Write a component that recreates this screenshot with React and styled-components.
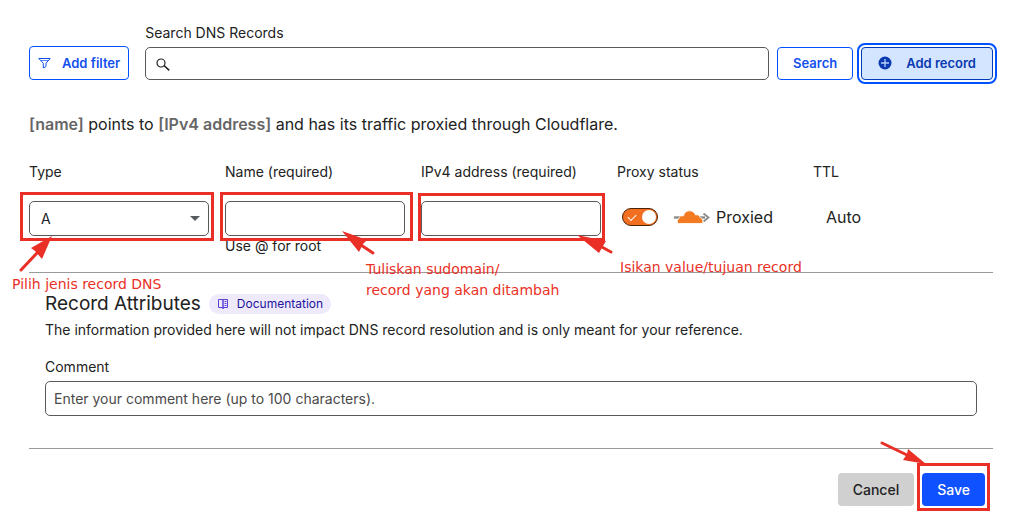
import { useState } from 'react';
import styled, { createGlobalStyle } from 'styled-components';

const GlobalStyle = createGlobalStyle`
  * {
    box-sizing: border-box;
  }

  body {
    margin: 0;
    background-color: #ffffff;
    color: #222222;
    font-family: Inter, 'Liberation Sans', sans-serif;
    font-size: 14px;
    line-height: 20px;
  }

  input,
  select,
  button {
    font-family: inherit;
    font-size: 14px;
    color: inherit;
  }
`;

const Page = styled.main`
  padding: 23px 31px 5px 29px;
`;

const Toolbar = styled.form`
  display: flex;
  align-items: flex-end;
  gap: 8px;
`;

const SearchField = styled.div`
  display: flex;
  flex-direction: column;
  flex: 1;
  gap: 4px;
  margin-left: 8px;
`;

const SearchBox = styled.div`
  position: relative;

  svg {
    position: absolute;
    top: 11px;
    left: 11px;
  }
`;

const TextInput = styled.input`
  display: block;
  width: 100%;
  height: ${(props) => props.$height || 35}px;
  padding: 0 8px;
  padding-left: ${(props) => (props.$icon ? 34 : 8)}px;
  border: 1px solid #595959;
  border-radius: 5px;
  background-color: white;

  &::placeholder {
    color: #4a4a4a;
    opacity: 1;
  }
`;

const OutlineButton = styled.button`
  display: flex;
  align-items: center;
  justify-content: center;
  gap: ${(props) => props.$gap || 10}px;
  height: ${(props) => props.$height || 33}px;
  padding: 0 ${(props) => props.$pad || 8}px 1px;
  border: 1px solid #0051ff;
  border-radius: 4px;
  background-color: white;
  color: #1250ee;
  font-size: 13px;
  font-weight: 600;
  white-space: nowrap;
  cursor: pointer;
`;

const AddRecordButton = styled(OutlineButton)`
  border-color: #003cb8;
  background-color: #d4e5ff;
  color: #0a39b0;
  outline: 2px solid #0051ff;
  outline-offset: 2px;
`;

const Summary = styled.p`
  margin: 32px 0 0;
  font-size: 16px;
  line-height: 24px;

  strong {
    color: #666666;
    font-weight: 600;
  }
`;

const Fields = styled.div`
  display: grid;
  grid-template-columns: repeat(5, 1fr);
  gap: 16px;
  margin-top: 26px;
  padding-bottom: 16px;
  border-bottom: 1px solid #9a9a9a;
`;

const Field = styled.div`
  display: flex;
  flex-direction: column;
`;

const FieldLabel = styled.label`
  margin-bottom: 19px;
`;

const Control = styled.div`
  position: relative;
`;

const Select = styled.select`
  display: block;
  width: 100%;
  height: 35px;
  padding: 0 11px;
  border: 1px solid #595959;
  border-radius: 5px;
  background-color: white;
  appearance: none;
`;

const Caret = styled.span`
  position: absolute;
  top: 15px;
  right: 9px;
  border: 5px solid transparent;
  border-top-color: #555c60;
  border-bottom: 0;
  pointer-events: none;
`;

const Value = styled.div`
  display: flex;
  align-items: center;
  height: 32px;
  padding-left: ${(props) => props.$indent}px;
  font-size: 16px;
`;

const Switch = styled.input`
  position: relative;
  width: 36px;
  height: 18px;
  margin: 0 15px 0 0;
  border: 1px solid #4d2409;
  border-radius: 9px;
  background-color: ${(props) => (props.checked ? '#f26f21' : '#9a9a9a')};
  appearance: none;
  cursor: pointer;

  &::before {
    content: '';
    position: absolute;
    top: 5px;
    left: 5px;
    width: 7px;
    height: 4px;
    border-left: 1px solid white;
    border-bottom: 1px solid white;
    transform: rotate(-45deg);
  }

  &::after {
    content: '';
    position: absolute;
    top: 1px;
    left: ${(props) => (props.checked ? 19 : 1)}px;
    width: 14px;
    height: 14px;
    border-radius: 50%;
    background-color: white;
  }
`;

const ProxiedLabel = styled.label`
  display: flex;
  align-items: center;
  gap: 6px;
`;

const Attributes = styled.section`
  padding: 19px 16px 32px;
  border-bottom: 1px solid #9a9a9a;
`;

const TitleRow = styled.div`
  display: flex;
  align-items: center;
  gap: 8px;
`;

const Title = styled.h2`
  margin: 0;
  font-size: 19px;
  font-weight: 400;
  line-height: 24px;
`;

const DocLink = styled.a`
  display: flex;
  align-items: center;
  gap: 8px;
  height: 20px;
  padding: 0 8px;
  border-radius: 10px;
  background-color: #eeeafc;
  color: #25149b;
  font-size: 12px;
  text-decoration: none;
`;

const Description = styled.p`
  margin: 4px 0 17px;
`;

const CommentLabel = styled.label`
  display: block;
  margin-bottom: 4px;
`;

const Actions = styled.div`
  display: flex;
  justify-content: flex-end;
  gap: 8px;
  padding: 24px 8px 0 0;
`;

const SolidButton = styled.button`
  display: block;
  height: 33px;
  padding: 0 15px;
  border: none;
  border-radius: 4px;
  background-color: ${(props) => (props.$primary ? '#0f51ff' : '#d0d0d0')};
  color: ${(props) => (props.$primary ? 'white' : '#222222')};
  font-weight: 500;
  cursor: pointer;
`;

// red tutorial marks drawn over the form
const Highlight = styled.span`
  position: absolute;
  inset: ${(props) => props.$inset};
  border: 3px solid #e92f26;
  pointer-events: none;
`;

const ArrowSvg = styled.svg`
  position: absolute;
  top: 0;
  left: 0;
  overflow: visible;
  pointer-events: none;
`;

const Note = styled.span`
  position: absolute;
  top: ${(props) => props.$top}px;
  left: ${(props) => props.$left}px;
  color: #e92f26;
  font-family: 'DejaVu Sans', sans-serif;
  font-size: 14px;
  line-height: 21px;
  white-space: nowrap;
  pointer-events: none;
`;

const Arrow = ({ line, head }) => (
  <ArrowSvg width="1" height="1" aria-hidden="true">
    <path d={line} stroke="#e92f26" strokeWidth="3" strokeLinecap="round" />
    <path d={head} fill="#e92f26" />
  </ArrowSvg>
);

const FilterIcon = () => (
  <svg width="13" height="12" viewBox="0 0 13 12" fill="none" stroke="currentColor">
    <path d="M.8 1.5h11.400L8 6.200v3.300L5.300 11V6.200z" />
    <path d="M3 3.500h7" strokeWidth="0.7" />
  </svg>
);

const SearchIcon = () => (
  <svg width="14" height="13" viewBox="0 0 14 13" fill="none" stroke="#222222">
    <circle cx="5" cy="5" r="4" strokeWidth="1.2" />
    <path d="M8 7.5l5.2 4.8" strokeWidth="1.6" />
  </svg>
);

const PlusIcon = () => (
  <svg width="14" height="14" viewBox="0 0 14 14">
    <circle cx="7" cy="7" r="6.5" fill="#0a39b0" />
    <path d="M7 3v8M3 7h8" stroke="#b8cff8" strokeWidth="1.3" />
  </svg>
);

const BookIcon = () => (
  <svg width="12" height="12" viewBox="0 0 12 12" fill="none" stroke="#5b3fd6">
    <path d="M5.500 1.500h-4v8h4M6 1.500h4.500v8H6" />
    <path d="M7.500 3.500h2M7.500 5.500h2M7.500 7.500h2" />
    <path d="M6 1v10" strokeWidth="1.500" />
  </svg>
);

const CloudIcon = () => (
  <svg width="37" height="14" viewBox="0 0 37 14">
    <path d="M1 7.500h31" stroke="#8b8b8b" strokeWidth="2.400" />
    <path d="M30.500 3.500l5 4-5 4" fill="none" stroke="#8b8b8b" strokeWidth="1.800" />
    <path
      d="M5.500 13.500C4 13 3.800 9.500 6 8.500 6 6.500 8.500 5 10.500 6 11 3 13.500.8 16.500.8c3 0 5 1.600 6 4.200 2.200-.8 4.300.5 4.500 2.500 2.500.5 3.500 3.500 2.500 6z"
      fill="#f37a20"
      stroke="white"
      strokeWidth="0.8"
    />
  </svg>
);

const App = () => {
  const [proxied, setProxied] = useState(true);

  return (
    <>
      <GlobalStyle />
      <Page>
        <Toolbar onSubmit={(e) => e.preventDefault()}>
          <OutlineButton type="button" $height={34} $gap={11}>
            <FilterIcon />
            Add filter
          </OutlineButton>
          <SearchField>
            <label htmlFor="search">Search DNS Records</label>
            <SearchBox>
              <TextInput id="search" $height={33} $icon />
              <SearchIcon />
            </SearchBox>
          </SearchField>
          <OutlineButton type="submit" $pad={15}>
            Search
          </OutlineButton>
          <AddRecordButton type="button" $pad={16} $gap={14}>
            <PlusIcon />
            Add record
          </AddRecordButton>
        </Toolbar>

        <Summary>
          <strong>[name]</strong> points to <strong>[IPv4 address]</strong> and
          has its traffic proxied through Cloudflare.
        </Summary>

        <Fields>
          <Field>
            <FieldLabel htmlFor="type">Type</FieldLabel>
            <Control>
              <Select id="type" defaultValue="A">
                <option>A</option>
              </Select>
              <Caret />
              <Highlight $inset="-9px -5px -5px -9px" />
              <Arrow line="M-8 69L8 52" head="M23 35L2 47L6 50L13 58Z" />
              <Note $top={73} $left={-17}>
                Pilih jenis record DNS
              </Note>
            </Control>
          </Field>
          <Field>
            <FieldLabel htmlFor="name">Name (required)</FieldLabel>
            <Control>
              <TextInput id="name" />
              <Highlight $inset="-9px -8px -5px -5px" />
              <Arrow line="M136 44L148 52" head="M117 30L142 39L138 43L134 51Z" />
              <Note $top={58} $left={141}>
                Tuliskan sudomain/
                <br />
                record yang akan ditambah
              </Note>
            </Control>
            <span>Use @ for root</span>
          </Field>
          <Field>
            <FieldLabel htmlFor="ipv4">IPv4 address (required)</FieldLabel>
            <Control>
              <TextInput id="ipv4" />
              <Highlight $inset="-8px -4px -5px -3px" />
              <Arrow line="M179 45L190 51" head="M156 34L185 40L182 45L178 52Z" />
              <Note $top={56} $left={199}>
                Isikan value/tujuan record
              </Note>
            </Control>
          </Field>
          <Field>
            <FieldLabel as="span">Proxy status</FieldLabel>
            <Value $indent={5}>
              <Switch
                id="proxied"
                type="checkbox"
                checked={proxied}
                onChange={(e) => setProxied(e.target.checked)}
              />
              <ProxiedLabel htmlFor="proxied">
                <CloudIcon />
                Proxied
              </ProxiedLabel>
            </Value>
          </Field>
          <Field>
            <FieldLabel as="span">TTL</FieldLabel>
            <Value $indent={13}>Auto</Value>
          </Field>
        </Fields>

        <Attributes>
          <TitleRow>
            <Title>Record Attributes</Title>
            <DocLink href="#">
              <BookIcon />
              Documentation
            </DocLink>
          </TitleRow>
          <Description>
            The information provided here will not impact DNS record resolution
            and is only meant for your reference.
          </Description>
          <CommentLabel htmlFor="comment">Comment</CommentLabel>
          <TextInput
            id="comment"
            placeholder="Enter your comment here (up to 100 characters)."
          />
        </Attributes>

        <Actions>
          <SolidButton type="button">Cancel</SolidButton>
          <Control>
            <SolidButton type="submit" $primary>
              Save
            </SolidButton>
            <Highlight $inset="-10px -5px -5px -5px" />
            <Arrow line="M-40 -30L-15 -18" head="M4 -9L-14 -24L-15 -19L-19 -13Z" />
          </Control>
        </Actions>
      </Page>
    </>
  );
};

export default App;
